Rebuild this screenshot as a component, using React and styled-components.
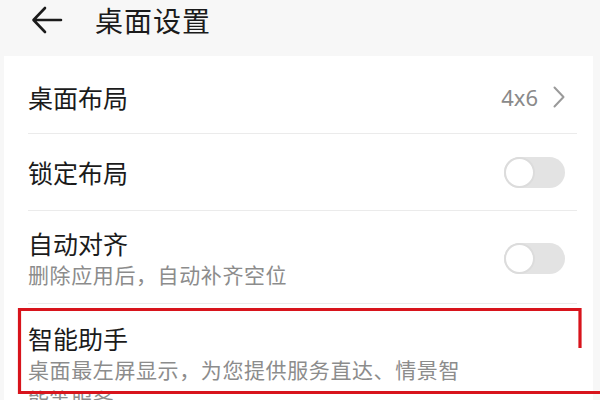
import styled, { createGlobalStyle } from "styled-components"

const Global = createGlobalStyle`
  html, body {
    margin: 0;
    padding: 0;
    background: #f7f7f7;
    overflow: hidden;
  }
  * { box-sizing: border-box; }
`

const items = [
  { id: 1, title: "桌面布局", value: "4x6", height: 77, pad: 4 },
  { id: 2, title: "锁定布局", toggle: true, height: 76 },
  { id: 3, title: "自动对齐", sub: "删除应用后，自动补齐空位", toggle: true, height: 92, pad: 2 },
  { id: 4, title: "智能助手", sub: "桌面最左屏显示，为您提供服务直达、情景智能等服务", height: 120, pad: 18, top: true },
]

export default function App() {
  return (
    <Page>
      <Global />
      <Header>
        <Back viewBox="0 0 32 28">
          <path d="M30 14H3M14 2L2.5 14L14 26" />
        </Back>
        <Title>桌面设置</Title>
      </Header>
      <Card>
        {items.map((it, i) => (
          <div key={it.id}>
            {i > 0 && <Divider />}
            <Row $h={it.height} $pad={it.pad || 0} $top={it.top}>
              <Texts>
                <Label>{it.title}</Label>
                {it.sub && <Sub>{it.sub}</Sub>}
              </Texts>
              {it.value && (
                <Value>
                  {it.value}
                  <Chevron viewBox="0 0 12 22">
                    <path d="M1.5 1.5L10.5 11L1.5 20.5" />
                  </Chevron>
                </Value>
              )}
              {it.toggle && (
                <Switch>
                  <Knob />
                </Switch>
              )}
            </Row>
          </div>
        ))}
      </Card>
      <Mark viewBox="0 0 600 400">
        <path d="M580 348V309.5H19.5V392.5H600" />
      </Mark>
    </Page>
  )
}

const Page = styled.div`
  position: relative;
  width: 600px;
  height: 400px;
  overflow: hidden;
  font-family: "Noto Sans CJK SC", "Noto Sans", sans-serif;
  background: #f7f7f7;
`
const Header = styled.div`
  height: 56px;
  display: flex;
  align-items: flex-start;
  padding: 0 0 0 31px;
`
const Back = styled.svg`
  width: 32px;
  height: 28px;
  margin-top: 6px;
  fill: none;
  stroke: #1b1b1b;
  stroke-width: 2.6;
  stroke-linecap: round;
  stroke-linejoin: round;
`
const Title = styled.div`
  margin-left: 32px;
  font-size: 28px;
  line-height: 40px;
  letter-spacing: 1px;
  color: #1b1b1b;
`
const Card = styled.div`
  background: #ffffff;
  margin: 0 7px 0 4px;
  height: 344px;
  padding-left: 24px;
`
const Divider = styled.div`
  height: 1px;
  background: #ebebeb;
  margin-right: 16px;
`
const Row = styled.div`
  height: ${(p) => p.$h}px;
  padding: ${(p) => p.$pad}px 25px 0 0;
  display: flex;
  align-items: ${(p) => (p.$top ? "flex-start" : "center")};
  justify-content: space-between;
`
const Texts = styled.div`
  display: flex;
  flex-direction: column;
`
const Label = styled.div`
  font-size: 25px;
  line-height: 32px;
  color: #1b1b1b;
`
const Sub = styled.div`
  max-width: 440px;
  font-size: 21px;
  letter-spacing: 0.6px;
  line-height: 30px;
  color: #8c8c8c;
`
const Value = styled.div`
  display: flex;
  align-items: center;
  gap: 15px;
  font-family: "Noto Sans", sans-serif;
  font-size: 22px;
  color: #8a8a8a;
  margin-right: 3px;
`
const Chevron = styled.svg`
  width: 12px;
  height: 22px;
  fill: none;
  stroke: #9a9a9a;
  stroke-width: 2;
  stroke-linecap: round;
  stroke-linejoin: round;
`
const Switch = styled.div`
  width: 61px;
  height: 31px;
  border-radius: 16px;
  background: #e3e3e3;
  display: flex;
  align-items: center;
  margin-right: 3px;
`
const Knob = styled.div`
  width: 31px;
  height: 31px;
  border-radius: 50%;
  background: #ffffff;
  border: 2px solid #dcdcdc;
`
const Mark = styled.svg`
  position: absolute;
  left: 0;
  top: 0;
  width: 600px;
  height: 400px;
  fill: none;
  stroke: #d8141c;
  stroke-width: 3.2;
  pointer-events: none;
`
